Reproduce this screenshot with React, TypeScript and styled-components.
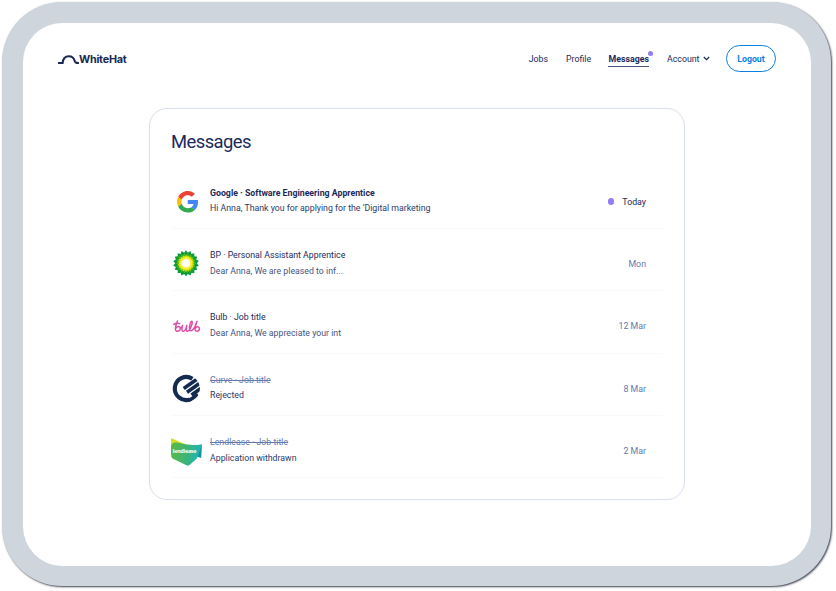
import React from "react";
import styled, { createGlobalStyle } from "styled-components";

const Global = createGlobalStyle`
  * { box-sizing: border-box; }
  body { margin: 0; background: #fff; font-family: Roboto, "Liberation Sans", sans-serif; color: #1b2a5b; }
  svg { display: block; }
`;

const Device = styled.div`
  width: 829px;
  height: 584px;
  margin: 2px 0 4px 2px;
  border: solid #ced5dc;
  border-width: 21px 20px 20px 21px;
  border-radius: 60px;
  background: #fff;
  box-shadow: 1px 1px 2px rgba(40, 45, 60, 0.9);
`;

const Page = styled.div`
  display: flow-root;
  height: 591px;
  overflow: hidden;
`;

const Header = styled.header`
  display: flex;
  align-items: center;
  justify-content: space-between;
  height: 27px;
  margin: 22px 35px 0;
`;

const Brand = styled.div`
  display: flex;
  align-items: center;
  padding-top: 2px;
  font: 700 10.8px/14px Inter, sans-serif;
  letter-spacing: -0.25px;
  color: #1a2950;
`;

const Nav = styled.nav`
  display: flex;
  align-items: center;
  font-size: 8.8px;
  line-height: 14px;
`;

const NavLink = styled.a<{ $active?: boolean; $gap: number }>`
  position: relative;
  display: flex;
  align-items: center;
  gap: 3.5px;
  height: 14px;
  margin-right: ${(p) => p.$gap}px;
  font-weight: ${(p) => (p.$active ? 700 : 400)};
  box-shadow: ${(p) => (p.$active ? "0 1px 0 #4a5680" : "none")};
`;

const Notice = styled.span`
  position: absolute;
  top: -0.5px;
  right: -4.5px;
  width: 5px;
  height: 5px;
  border-radius: 50%;
  background: #937cf4;
`;

const Logout = styled.button`
  width: 50px;
  height: 27px;
  padding: 0;
  border: 1.3px solid #0c7fe2;
  border-radius: 14px;
  background: #fff;
  color: #0c7fe2;
  font: 700 8.75px/14px Roboto, sans-serif;
`;

const Card = styled.main`
  width: 536px;
  height: 392px;
  margin: 36px 0 0 126px;
  padding: 21px 21px 0;
  border: 1px solid #d9def0;
  border-radius: 18px;
`;

const Title = styled.h1`
  margin: 0 0 12.4px;
  font-size: 18.4px;
  line-height: 24px;
  font-weight: 400;
  letter-spacing: -0.55px;
`;

const Row = styled.article`
  display: flex;
  align-items: center;
  width: 492px;
  height: 62.4px;
  padding: 6px 17px 0 0;
  border-bottom: 1px solid #f8f9fb;
`;

const Logo = styled.div`
  width: 32px;
  height: 32px;
  margin: 4px 7px 0 0;
`;

const Copy = styled.div`
  flex: 1;
  padding-top: 2.4px;
  font-size: 8.77px;
  line-height: 15.6px;
`;

const Role = styled.div<{ $unread?: boolean; $closed?: boolean }>`
  font-weight: ${(p) => (p.$unread ? 700 : 400)};
  color: ${(p) => (p.$closed ? "#6479ae" : "#1b2a5b")};
  text-decoration: ${(p) => (p.$closed ? "line-through" : "none")};
`;

const Preview = styled.div<{ $dark?: boolean }>`
  color: ${(p) => (p.$dark ? "#2c3a68" : "#465580")};
`;

const Time = styled.time<{ $unread?: boolean }>`
  display: flex;
  align-items: center;
  gap: 8px;
  padding-top: 3px;
  font-size: 8.8px;
  line-height: 14px;
  color: ${(p) => (p.$unread ? "#1b2a5b" : "#6479ae")};
`;

const Dot = styled.span`
  width: 6.5px;
  height: 6.5px;
  border-radius: 50%;
  background: #937cf4;
`;

const HatMark = () => (
  <svg width="21" height="12" viewBox="0 0 21 12" fill="none" stroke="#1a2950" strokeWidth="2.1">
    <path d="M0 9H4.6C5 4.8 7.4 2.2 10.8 2.2C14.2 2.2 16.2 4.8 16.8 7.2Q17.4 9.2 21 9" />
  </svg>
);

const GoogleLogo = () => (
  <svg width="32" height="32" viewBox="0 0 32 32">
    <g transform="translate(6 5) scale(.448)">
      <path fill="#EA4335" d="M24 9.5c3.54 0 6.71 1.22 9.21 3.6l6.85-6.85C35.9 2.38 30.47 0 24 0 14.62 0 6.51 5.38 2.56 13.22l7.98 6.19C12.43 13.72 17.74 9.5 24 9.5z" />
      <path fill="#4285F4" d="M46.98 24.55c0-1.57-.15-3.09-.38-4.55H24v9.02h12.94c-.58 2.96-2.26 5.48-4.78 7.18l7.73 6c4.51-4.18 7.09-10.36 7.09-17.65z" />
      <path fill="#FBBC05" d="M10.53 28.59c-.48-1.45-.76-2.99-.76-4.59s.27-3.14.76-4.59l-7.98-6.19C.92 16.46 0 20.12 0 24c0 3.88.92 7.54 2.56 10.78l7.97-6.19z" />
      <path fill="#34A853" d="M24 48c6.48 0 11.93-2.13 15.89-5.81l-7.73-6c-2.15 1.45-4.92 2.3-8.16 2.3-6.26 0-11.57-4.22-13.47-9.91l-7.98 6.19C6.51 42.62 14.62 48 24 48z" />
    </g>
  </svg>
);

const burst = (outer: number, inner: number, turn: number) =>
  Array.from({ length: 36 }, (_, i) => {
    const a = ((i * 10 + turn) * Math.PI) / 180;
    const r = i % 2 ? inner : outer;
    return `${(15 + r * Math.sin(a)).toFixed(2)},${(15.3 - r * Math.cos(a)).toFixed(2)}`;
  }).join(" ");

const BpLogo = () => (
  <svg width="32" height="32" viewBox="0 0 32 32">
    <polygon points={burst(13, 10.8, 0)} fill="#079c38" />
    <polygon points={burst(10.4, 8.2, 10)} fill="#4fb51b" />
    <polygon points={burst(8.4, 6.8, 0)} fill="#d7e500" />
    <polygon points={burst(6.8, 5.2, 10)} fill="#fff04e" />
    <circle cx="15" cy="15.3" r="4" fill="#fff" />
  </svg>
);

const BulbLogo = () => (
  <svg width="32" height="32" viewBox="0 0 32 32" fill="none" stroke="#df4ba8" strokeWidth="1.45" strokeLinecap="round" strokeLinejoin="round">
    <path d="M2.8 13.4Q5 11.8 8.8 12.6M6.4 9.9Q4.4 15 4.4 18.2C4.6 21.4 9 20.8 9.3 17.8C9.3 15 6.5 14.8 5.3 17M9.3 16.8Q10.8 16.6 11.6 14.4Q10 20.4 12.2 20.4Q14.6 20 15.8 14.4Q14.6 20.4 16.4 20.4C19 20 21.8 12.4 21.2 10.6C20 8.6 17.8 15.6 18.6 18.8C19.8 22 24.6 17 26 10.4Q23.6 15.6 23.9 18.4C24.4 21.2 28.5 20.8 28.5 17.6C28.4 15 25.6 15.2 24.5 17.2" />
  </svg>
);

const CurveLogo = () => (
  <svg width="32" height="32" viewBox="0 0 32 32" fill="none" stroke="#142b4f">
    <clipPath id="disc"><circle cx="15.2" cy="15.6" r="13.7" /></clipPath>
    <path d="M21.4 5.8A11.5 11.5 0 1 0 18.8 26.5" strokeWidth="4.2" />
    <g clipPath="url(#disc)" strokeWidth="3.6">
      <path d="M12.7 15.4L27 5.4" />
      <path d="M16 19.2L30 9.3" />
      <path d="M20.5 22L31 14.6" />
      <path d="M17.5 28L27 21.5" />
    </g>
  </svg>
);

const LendleaseLogo = () => (
  <svg width="32" height="32" viewBox="0 0 32 32">
    <defs>
      <linearGradient id="lend" x1="0" y1=".4" x2="1" y2=".5">
        <stop stopColor="#5ab947" />
        <stop offset=".55" stopColor="#3bb47b" />
        <stop offset="1" stopColor="#16b5c5" />
      </linearGradient>
    </defs>
    <path d="M0 2L16 9L0 14Z" fill="#d5df22" />
    <path d="M31 8.2L30.2 22L24 20Z" fill="#18959c" />
    <path d="M0 10Q1 6 6 6.6Q19 10.5 31 8.2L25.8 22.5L18.3 29.2Q17 30 15.5 29.2L1.5 22.5Q0 21 0 18Z" fill="url(#lend)" />
    <text x="1.8" y="16.9" fill="#fff" fontFamily="Lato, sans-serif" fontSize="5.8" fontWeight="900" textLength="23.5">lendlease</text>
  </svg>
);

interface Message {
  logo: React.ReactNode;
  role: string;
  preview: string;
  date: string;
  unread?: boolean;
  closed?: boolean;
}

const messages: Message[] = [
  { logo: <GoogleLogo />, role: "Google · Software Engineering Apprentice", preview: "Hi Anna, Thank you for applying for the ‘Digital marketing", date: "Today", unread: true },
  { logo: <BpLogo />, role: "BP · Personal Assistant Apprentice", preview: "Dear Anna, We are pleased to inf...", date: "Mon" },
  { logo: <BulbLogo />, role: "Bulb · Job title", preview: "Dear Anna, We appreciate your int", date: "12 Mar" },
  { logo: <CurveLogo />, role: "Curve · Job title", preview: "Rejected", date: "8 Mar", closed: true },
  { logo: <LendleaseLogo />, role: "Lendlease · Job title", preview: "Application withdrawn", date: "2 Mar", closed: true },
];

export default function App() {
  return (
    <Page>
      <Global />
      <Device>
        <Header>
          <Brand><HatMark />WhiteHat</Brand>
          <Nav>
            <NavLink $gap={18}>Jobs</NavLink>
            <NavLink $gap={17.3}>Profile</NavLink>
            <NavLink $gap={18} $active>Messages<Notice /></NavLink>
            <NavLink $gap={16}>
              Account
              <svg width="7" height="5" viewBox="0 0 7 5" fill="none" stroke="#1b2a5b" strokeWidth="1.2"><path d="M.8 1L3.5 3.7L6.2 1" /></svg>
            </NavLink>
            <Logout>Logout</Logout>
          </Nav>
        </Header>
        <Card>
          <Title>Messages</Title>
          {messages.map((m) => (
            <Row key={m.role}>
              <Logo>{m.logo}</Logo>
              <Copy>
                <Role $unread={m.unread} $closed={m.closed}>{m.role}</Role>
                <Preview $dark={m.unread || m.closed}>{m.preview}</Preview>
              </Copy>
              <Time $unread={m.unread}>{m.unread && <Dot />}{m.date}</Time>
            </Row>
          ))}
        </Card>
      </Device>
    </Page>
  );
}
